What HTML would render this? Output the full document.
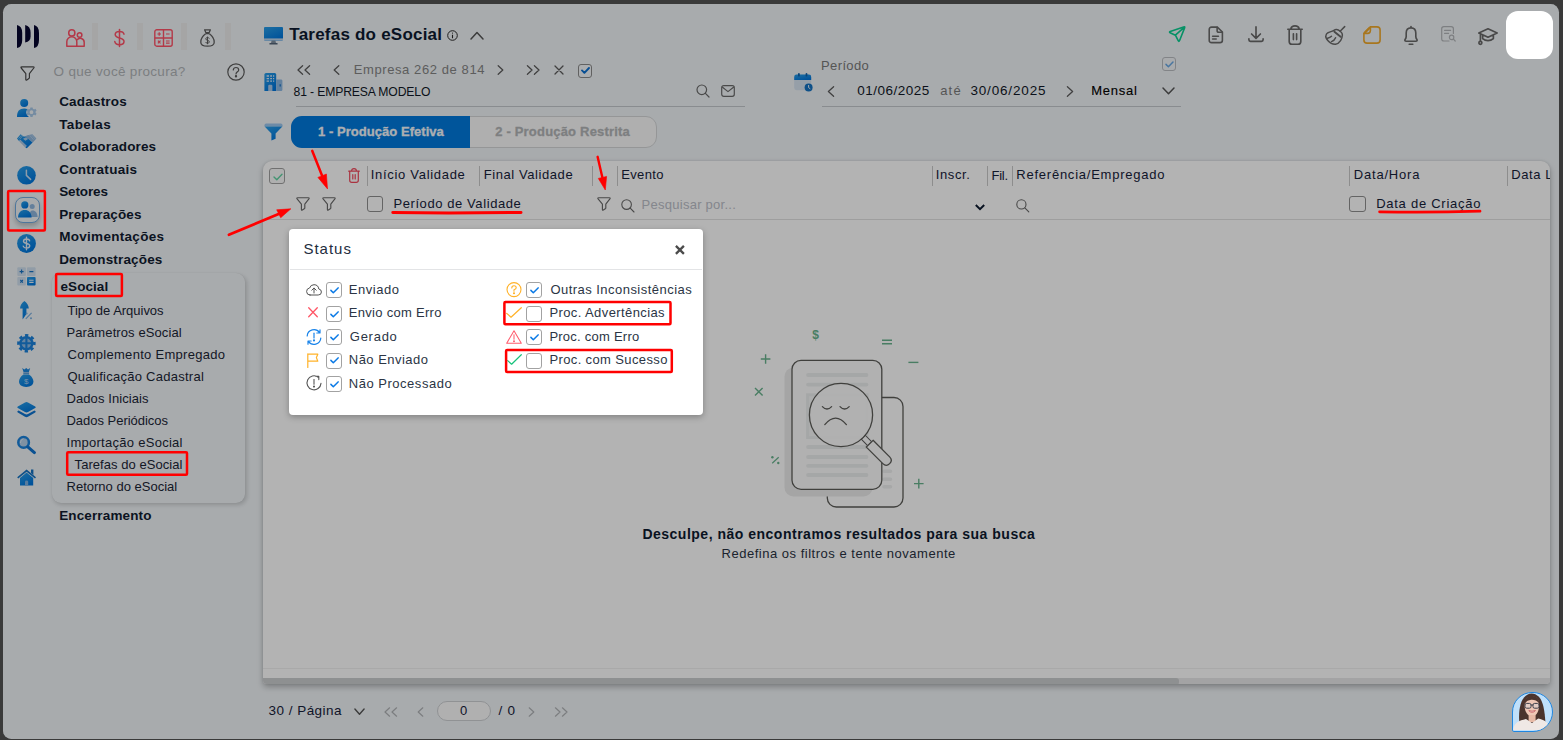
<!DOCTYPE html>
<html lang="pt-BR">
<head>
<meta charset="utf-8">
<title>Tarefas do eSocial</title>
<style>
html,body{margin:0;padding:0;width:1563px;height:740px;overflow:hidden;background:#3a3a3a;}
body{font-family:"Liberation Sans",sans-serif;position:relative;}
#app{position:absolute;left:3px;top:4px;width:1556px;height:734.5px;border-radius:8.5px;background:#f0f4f7;overflow:hidden;}
#c{position:absolute;left:-3px;top:-4px;width:1563px;height:740px;}
#dim{position:absolute;left:0;top:0;width:1563px;height:740px;background:rgba(0,0,0,.298);}
.t{position:absolute;white-space:pre;line-height:20px;height:20px;font-family:"Liberation Sans",sans-serif;}
.a{position:absolute;}
svg{position:absolute;overflow:visible;}
.sep{position:absolute;width:6px;height:27px;top:23px;background:#ececec;}
.vs{position:absolute;width:1px;background:#c9c9c9;}
.cb{position:absolute;box-sizing:border-box;border:1px solid #8f8f8f;border-radius:3px;background:#fff;}
</style>
</head>
<body>
<div id="app"><div id="c">
<!-- ============ SIDEBAR ============ -->
<svg width="0" height="0" style="position:absolute"><defs>
<linearGradient id="bg1" x1="0" y1="0" x2="0.6" y2="1"><stop offset="0" stop-color="#2a9fe8"/><stop offset="1" stop-color="#0076dc"/></linearGradient>
</defs></svg>
<!-- logo -->
<svg style="left:17px;top:25px" width="22" height="23" viewBox="0 0 22 23">
<path d="M0 0 Q5.2 1 5.2 8 V15 Q5.2 22 0 23 Z" fill="#07072f"/>
<path d="M8.2 0 Q13.6 1 13.6 8 V11.5 Q13.6 16.5 8.2 17.5 Z" fill="#07072f"/>
<path d="M17 0 Q22 1 22 8 V15 Q22 22 17 23 Z" fill="#07072f"/>
</svg>
<!-- top shortcut icons -->
<svg style="left:66px;top:29px" width="19" height="18" viewBox="0 0 19 18" fill="none" stroke="#ff5267" stroke-width="1.5">
<circle cx="5.8" cy="3.9" r="3.1"/><path d="M0.8 17.2 V12.8 A5 5 0 0 1 10.8 12.8 V17.2 Z" stroke-linejoin="round"/>
<circle cx="13.6" cy="6" r="2.3"/><path d="M10.8 17.2 H18.2 V13.4 A3.9 3.9 0 0 0 11 11.2" stroke-linejoin="round"/>
</svg>
<div class="sep" style="left:92px"></div>
<svg style="left:114px;top:29px" width="11" height="18" viewBox="0 0 11 18" fill="none" stroke="#ff5267" stroke-width="1.5" stroke-linecap="round">
<path d="M5.5 0.5 V17.5"/><path d="M10 5.2 C9.6 3.2 7.6 2.4 5.5 2.4 C3 2.4 1.2 3.6 1.2 5.6 C1.2 7.8 3.2 8.4 5.5 9 C7.9 9.6 10 10.3 10 12.5 C10 14.6 8 15.7 5.5 15.7 C3 15.7 1.2 14.7 0.8 12.6"/>
</svg>
<div class="sep" style="left:136.5px"></div>
<svg style="left:154px;top:29px" width="19" height="18" viewBox="0 0 19 18" fill="none" stroke="#ff5267" stroke-width="1.4">
<rect x="0.8" y="0.8" width="17.4" height="16.4" rx="2"/><path d="M9.5 0.8 V17.2 M0.8 9 H18.2"/>
<path d="M3.4 5 H7 M5.2 3.2 V6.8 M12 5 H15.6 M3.9 11.6 L6.5 14.4 M6.5 11.6 L3.9 14.4 M12 12 H15.6 M12 14.2 H15.6" stroke-width="1.2"/>
</svg>
<div class="sep" style="left:180.5px"></div>
<svg style="left:200px;top:29px" width="15" height="18" viewBox="0 0 15 18" fill="none" stroke="#5e5e5e" stroke-width="1.3" stroke-linejoin="round">
<path d="M4.6 0.8 H10.4 L9.2 3.6 H5.8 Z"/><path d="M5.6 4.6 H9.4"/>
<path d="M5.6 4.8 C2.6 7 0.8 10.4 0.8 13.2 C0.8 16 3 17.2 7.5 17.2 C12 17.2 14.2 16 14.2 13.2 C14.2 10.4 12.4 7 9.4 4.8"/>
<path d="M9.3 9.6 C9 8.8 8.3 8.5 7.5 8.5 C6.5 8.5 5.8 9 5.8 9.9 C5.8 11.7 9.3 10.9 9.3 12.8 C9.3 13.7 8.5 14.2 7.5 14.2 C6.6 14.2 5.9 13.8 5.6 13 M7.5 7.6 V15.2" stroke-width="1"/>
</svg>
<div class="sep" style="left:224.5px"></div>
<!-- search row -->
<svg style="left:20px;top:66px" width="15" height="15" viewBox="0 0 15 15" fill="none" stroke="#4a4a4a" stroke-width="1.2" stroke-linejoin="round">
<path d="M1.8 0.8 H13.2 Q14.6 0.8 13.8 2 L9.4 7.6 V11.6 Q9.4 12.2 8.9 12.6 L6.8 14 Q5.8 14.5 5.8 13.4 V7.6 L1.2 2 Q0.4 0.8 1.8 0.8 Z"/></svg>
<span class="t" style="left:53.60px;top:61px;font-size:13.5px;font-weight:400;color:#b0b4b8;letter-spacing:0.313px;line-height:21px;height:21px;">O que você procura?</span>
<svg style="left:227px;top:63px" width="18" height="18" viewBox="0 0 18 18" fill="none" stroke="#5a5a5a" stroke-width="1.2">
<circle cx="9" cy="9" r="8.2"/><path d="M6.3 7 C6.3 5.4 7.5 4.5 9 4.5 C10.5 4.5 11.7 5.4 11.7 6.9 C11.7 8.8 9 8.9 9 11" stroke-linecap="round"/><circle cx="9" cy="13.2" r="0.6" fill="#5a5a5a"/>
</svg>
<!-- left icon column -->
<!-- user gear -->
<svg style="left:17px;top:99px" width="20" height="18" viewBox="0 0 20 18">
<circle cx="7.2" cy="4" r="4" fill="url(#bg1)"/>
<path d="M0 18 C0 12.4 2.4 9.6 7.2 9.6 C8.6 9.6 9.8 9.9 10.6 10.4 C9.2 11.6 9 13 9.4 14.6 C9.8 16.2 10.8 17.2 12 18 Z" fill="url(#bg1)"/>
<path d="M13.4 8.4 H15.6 L15.9 9.8 L17.1 10.4 L18.4 9.7 L19.6 11.5 L18.6 12.5 V13.7 L19.6 14.7 L18.4 16.5 L17.1 15.8 L15.9 16.5 L15.6 17.9 H13.4 L13.1 16.5 L11.9 15.8 L10.6 16.5 L9.4 14.7 L10.4 13.7 V12.5 L9.4 11.5 L10.6 9.7 L11.9 10.4 L13.1 9.8 Z M14.5 11.3 A1.85 1.85 0 1 0 14.5 15 A1.85 1.85 0 1 0 14.5 11.3 Z" fill="#a6c6e6" fill-rule="evenodd"/>
</svg>
<!-- handshake -->
<svg style="left:17px;top:134px" width="20" height="15" viewBox="0 0 20 15">
<path d="M6.4 3.2 L10.4 1.2 L15.4 0.2 L19.4 4.6 L15.8 8.6 L9.6 3.6 Z" fill="#8fb6dc"/>
<path d="M12.6 1.2 L16.6 5.8 M14.4 0.6 L18.2 5" stroke="#b9d2ea" stroke-width=".8" fill="none"/>
<path d="M2.2 7.2 L4.4 5.6 L10.4 11.6 L8.2 13.4 Z" fill="#8fb6dc" opacity=".75"/>
<path d="M0 4.4 L3.6 0.2 L6.6 2.6 L8.8 2.8 L15.6 8.6 L9.8 14.2 L8.4 13.6 L9.8 11.8 L3.4 5.8 L2 7 Z" fill="url(#bg1)"/>
<path d="M1.4 4.6 L4.6 1.2 M2.6 5.4 L5.6 2" stroke="#a9c9e8" stroke-width=".7" fill="none"/>
<path d="M6 4.8 L9 3.2 L11.2 5 L8.4 6.8 Z" fill="#b9d2ea" opacity=".9"/>
</svg>
<!-- clock -->
<svg style="left:17px;top:166px" width="19" height="19" viewBox="0 0 19 19">
<circle cx="9.5" cy="9.3" r="9.3" fill="url(#bg1)"/>
<path d="M9.4 4.2 V9.4 L13.6 13.4" fill="none" stroke="#c9dff2" stroke-width="1.5" stroke-linecap="round" stroke-linejoin="round"/>
</svg>
<!-- selected: users -->
<div class="a" style="left:14.5px;top:196.5px;width:25.5px;height:26.5px;box-sizing:border-box;border:1px solid #6fa9de;border-radius:8px;background:#eef2f6;box-shadow:0 3px 5px rgba(0,0,0,.22);"></div>
<svg style="left:18px;top:201px" width="20" height="17" viewBox="0 0 20 17">
<circle cx="14.2" cy="5.6" r="2.5" fill="#8fb6dd"/>
<path d="M11 16 C11 11.6 12.4 9.4 14.6 9.4 C17.4 9.4 19.4 11.6 19.6 16 Z" fill="#8fb6dd"/>
<circle cx="6.8" cy="3.9" r="3.6" fill="url(#bg1)"/>
<path d="M0 16.4 C0.2 11.6 2.8 9 6.8 9 C10.8 9 13.4 11.6 13.6 16.4 Z" fill="url(#bg1)"/>
</svg>
<!-- dollar circle -->
<svg style="left:17px;top:234px" width="19" height="19" viewBox="0 0 19 19">
<circle cx="9.5" cy="9.5" r="9.4" fill="url(#bg1)"/>
<path d="M9.5 3.2 V15.8 M12.6 6.8 C12.3 5.6 11 5 9.5 5 C7.8 5 6.5 5.8 6.5 7.2 C6.5 10.2 12.7 8.6 12.7 11.8 C12.7 13.3 11.3 14.1 9.5 14.1 C7.8 14.1 6.6 13.4 6.2 12.1" fill="none" stroke="#e4eef8" stroke-width="1.4" stroke-linecap="round"/>
</svg>
<!-- calculator -->
<svg style="left:17px;top:267px" width="19" height="19" viewBox="0 0 19 19">
<rect x="0.3" y="0.3" width="8.6" height="8.6" rx="1" fill="#cfdfee"/><rect x="10" y="0.3" width="8.6" height="8.6" rx="1" fill="#cfdfee"/>
<rect x="0.3" y="10" width="8.6" height="8.6" rx="1" fill="#cfdfee"/><rect x="10" y="10" width="8.6" height="8.6" rx="1" fill="url(#bg1)"/>
<path d="M2.6 4.6 H6.6 M4.6 2.6 V6.6 M12.4 4.6 H16.4 M3.3 13 L5.9 15.6 M5.9 13 L3.3 15.6" stroke="#1673c4" stroke-width="1.1" fill="none"/>
<path d="M12.2 13.2 H16.6 M12.2 15.4 H16.6" stroke="#e8f1fa" stroke-width="1.1" fill="none"/>
</svg>
<!-- arrow / adjust -->
<svg style="left:20px;top:301px" width="13" height="19" viewBox="0 0 13 19">
<path d="M4.4 0 C7 1.8 8.6 4.6 8.8 7.4 L6.4 7.4 V13 L2.6 18.4 V7.4 L0 7.4 C0.2 4.6 1.8 1.8 4.4 0 Z" fill="url(#bg1)"/>
<path d="M5.8 17.8 L11.6 11.8" stroke="#7aaede" stroke-width="1.2"/><circle cx="6.6" cy="12.6" r="1" fill="#7aaede"/><circle cx="11" cy="17.2" r="1" fill="#7aaede"/>
</svg>
<!-- crosshair gear -->
<svg style="left:17px;top:334px" width="19" height="19" viewBox="0 0 19 19">
<circle cx="9.4" cy="9.3" r="7.9" fill="none" stroke="#1a82dc" stroke-width="2.7" stroke-dasharray="3.3 2.905" stroke-dashoffset="1.65"/>
<circle cx="9.4" cy="9.3" r="6" fill="#8dbbe6" stroke="#1a82dc" stroke-width="2.4"/>
<path d="M9.4 2.6 V16 M2.7 9.3 H16.1" stroke="#1a82dc" stroke-width="2.1"/>
</svg>
<!-- money bag -->
<svg style="left:19.2px;top:368px" width="15" height="19" viewBox="0 0 15 19">
<path d="M3.2 0 L5.4 1.6 L7.2 0 L9 1.6 L11.2 0 L9.9 4 H4.5 Z" fill="#1d86dc"/>
<rect x="4.3" y="4.3" width="5.8" height="1.9" fill="#5f9fd8"/>
<path d="M4.5 6.4 C1.4 8.4 0 11 0 13.6 C0 17 2.8 19 7.2 19 C11.6 19 14.4 17 14.4 13.6 C14.4 11 13 8.4 9.9 6.4 Z" fill="url(#bg1)"/>
<text x="7.2" y="16.4" font-family="Liberation Sans, sans-serif" font-size="8" font-weight="400" fill="#a9cdf0" text-anchor="middle">$</text>
</svg>
<!-- layers -->
<svg style="left:17px;top:402.2px" width="19" height="16" viewBox="0 0 19 16">
<path d="M1.6 8.4 L0.8 9 Q-0.4 9.8 0.8 10.6 L8 14.8 Q9.5 15.6 11 14.8 L18.2 10.6 Q19.4 9.8 18.2 9 L17.4 8.4 L11 12 Q9.5 12.8 8 12 Z" fill="#0f74d0"/>
<path d="M8 0.5 Q9.5 -0.3 11 0.5 L18.2 4.5 Q19.4 5.3 18.2 6.1 L11 10.1 Q9.5 10.9 8 10.1 L0.8 6.1 Q-0.4 5.3 0.8 4.5 Z" fill="url(#bg1)"/>
</svg>
<!-- magnifier -->
<svg style="left:17px;top:434.6px" width="20" height="20" viewBox="0 0 20 20">
<circle cx="6.6" cy="7.4" r="5.3" fill="#b4cfe9" stroke="#1a82dc" stroke-width="2.5"/>
<path d="M3.4 7.6 Q3.4 4.6 6 3.8" stroke="#dceaf7" stroke-width="1" fill="none" stroke-linecap="round"/>
<path d="M10.8 11.8 L17.4 17.6" stroke="#0f74d0" stroke-width="3.1" stroke-linecap="round"/>
</svg>
<!-- home -->
<svg style="left:17px;top:469px" width="20" height="17" viewBox="0 0 20 17">
<path d="M14 0.6 H16.4 V6 L14 4 Z" fill="#1572c2"/>
<path d="M3 9 L9.6 3.6 L16.2 9 V16.4 H3 Z" fill="url(#bg1)"/>
<path d="M9.6 0.6 L19 8.2 L18 9.5 L9.6 2.8 L1.2 9.5 L0.2 8.2 Z" fill="#1572c2"/>
<path d="M8 16.4 V13 Q8 11.6 9.6 11.6 Q11.2 11.6 11.2 13 V16.4 Z" fill="#7fb0de"/>
</svg>
<!-- menu labels -->
<span class="t" style="left:59.20px;top:91px;font-size:13.5px;font-weight:700;color:#111c30;letter-spacing:0.186px;line-height:21px;height:21px;">Cadastros</span>
<span class="t" style="left:59.20px;top:114px;font-size:13.5px;font-weight:700;color:#111c30;letter-spacing:0.372px;line-height:21px;height:21px;">Tabelas</span>
<span class="t" style="left:59.20px;top:136px;font-size:13.5px;font-weight:700;color:#111c30;letter-spacing:0.136px;line-height:21px;height:21px;">Colaboradores</span>
<span class="t" style="left:59.20px;top:159px;font-size:13.5px;font-weight:700;color:#111c30;letter-spacing:0.280px;line-height:21px;height:21px;">Contratuais</span>
<span class="t" style="left:59.20px;top:181px;font-size:13.5px;font-weight:700;color:#111c30;letter-spacing:-0.136px;line-height:21px;height:21px;">Setores</span>
<span class="t" style="left:59.20px;top:204px;font-size:13.5px;font-weight:700;color:#111c30;letter-spacing:0.126px;line-height:21px;height:21px;">Preparações</span>
<span class="t" style="left:59.20px;top:226px;font-size:13.5px;font-weight:700;color:#111c30;letter-spacing:0.294px;line-height:21px;height:21px;">Movimentações</span>
<span class="t" style="left:59.20px;top:249px;font-size:13.5px;font-weight:700;color:#111c30;letter-spacing:0.152px;line-height:21px;height:21px;">Demonstrações</span>
<div class="a" style="left:51.7px;top:272.5px;width:193.8px;height:230.2px;border-radius:9px;background:#f0f4f7;box-shadow:1.5px 2px 4px rgba(0,0,0,.16), 0 0 1px rgba(0,0,0,.1);"></div>
<span class="t" style="left:60.50px;top:276px;font-size:13.5px;font-weight:700;color:#111c30;letter-spacing:0.062px;line-height:21px;height:21px;">eSocial</span>
<span class="t" style="left:67.50px;top:300px;font-size:13px;font-weight:400;color:#1b2536;letter-spacing:-0.018px;line-height:21px;height:21px;">Tipo de Arquivos</span>
<span class="t" style="left:66.50px;top:322px;font-size:13px;font-weight:400;color:#1b2536;letter-spacing:0.103px;line-height:21px;height:21px;">Parâmetros eSocial</span>
<span class="t" style="left:67.50px;top:344px;font-size:13px;font-weight:400;color:#1b2536;letter-spacing:0.284px;line-height:21px;height:21px;">Complemento Empregado</span>
<span class="t" style="left:67.50px;top:366px;font-size:13px;font-weight:400;color:#1b2536;letter-spacing:0.262px;line-height:21px;height:21px;">Qualificação Cadastral</span>
<span class="t" style="left:66.50px;top:388px;font-size:13px;font-weight:400;color:#1b2536;letter-spacing:0.083px;line-height:21px;height:21px;">Dados Iniciais</span>
<span class="t" style="left:66.50px;top:410px;font-size:13px;font-weight:400;color:#1b2536;letter-spacing:-0.026px;line-height:21px;height:21px;">Dados Periódicos</span>
<span class="t" style="left:66.50px;top:432px;font-size:13px;font-weight:400;color:#1b2536;letter-spacing:0.277px;line-height:21px;height:21px;">Importação eSocial</span>
<span class="t" style="left:74.60px;top:454px;font-size:13px;font-weight:400;color:#1b2536;letter-spacing:0.055px;line-height:21px;height:21px;">Tarefas do eSocial</span>
<span class="t" style="left:66.50px;top:476px;font-size:13px;font-weight:400;color:#1b2536;letter-spacing:0.007px;line-height:21px;height:21px;">Retorno do eSocial</span>
<span class="t" style="left:59.20px;top:505px;font-size:13.5px;font-weight:700;color:#111c30;letter-spacing:0.133px;line-height:21px;height:21px;">Encerramento</span>
<!-- ============ HEADER ============ -->
<svg style="left:263.5px;top:27px" width="19" height="18" viewBox="0 0 19 18">
<rect x="0" y="0" width="19" height="13.4" rx="1" fill="url(#bg1)"/>
<rect x="0" y="11.4" width="19" height="2" fill="#bcd3ea"/>
<path d="M7.6 13.4 H11.4 L12 16 H7 Z" fill="#7e8fa0"/><rect x="5.4" y="16" width="8.2" height="1.4" rx=".5" fill="#55667a"/>
</svg>
<span class="t" style="left:289.30px;top:24px;font-size:17px;font-weight:700;color:#0d1a2f;letter-spacing:0.221px;line-height:21px;height:21px;">Tarefas do eSocial</span>
<svg style="left:447px;top:30px" width="11" height="11" viewBox="0 0 11 11" fill="none" stroke="#2a2a2a" stroke-width="1">
<circle cx="5.5" cy="5.5" r="4.8"/><path d="M5.5 4.8 V8.2" stroke-width="1.1"/><circle cx="5.5" cy="3.1" r=".6" fill="#2a2a2a" stroke="none"/></svg>
<svg style="left:470px;top:31px" width="14" height="9" viewBox="0 0 14 9" fill="none" stroke="#565656" stroke-width="1.5" stroke-linecap="round" stroke-linejoin="round"><path d="M1 8 L7 1.6 L13 8"/></svg>

<!-- top right action icons -->
<svg style="left:1168px;top:25px" width="18" height="18" viewBox="0 0 18 18" fill="none" stroke="#0ccf92" stroke-width="1.6" stroke-linejoin="round" stroke-linecap="round">
<path d="M15.6 1.9 L2.2 6.4 Q0.9 7 2.1 7.7 L7.4 10.2 L10.2 15.7 Q10.9 17 11.5 15.7 L16.6 2.9 Q17.2 1.4 15.6 1.9 Z M7.4 10.2 L16.2 2.3"/></svg>
<svg style="left:1208px;top:26px" width="16" height="18" viewBox="-0.5 -0.3 17 18.9" fill="none" stroke="#6a6a6a" stroke-width="1.7" stroke-linejoin="round" stroke-linecap="round">
<path d="M3.4 0.8 H9.4 L14.8 6 V14.6 Q14.8 17.2 12.2 17.2 H3.4 Q0.8 17.2 0.8 14.6 V3.4 Q0.8 0.8 3.4 0.8 Z"/><path d="M9.2 1 V4.6 Q9.2 6.2 10.8 6.2 H14.6"/><path d="M4.4 10.4 H10.6 M4.4 13.4 H8.2"/></svg>
<svg style="left:1248px;top:26px" width="16" height="17" viewBox="0 0 16 17" fill="none" stroke="#686868" stroke-width="1.65" stroke-linejoin="round" stroke-linecap="round">
<path d="M8 0.9 V12.2 M3.6 8 L8 12.4 L12.4 8 M0.9 12.8 V13.8 Q0.9 15.4 2.5 15.4 H13.5 Q15.1 15.4 15.1 13.8 V12.8"/></svg>
<svg style="left:1287px;top:25px" width="16" height="20" viewBox="0 0 16 20" fill="none" stroke="#686868" stroke-width="1.65" stroke-linejoin="round" stroke-linecap="round">
<path d="M0.8 4.2 H15.2 M3.8 4 Q4.4 0.9 8 0.9 Q11.6 0.9 12.2 4 M2.2 4.4 V16.4 Q2.2 19.2 5 19.2 H11 Q13.8 19.2 13.8 16.4 V4.4 M6.4 8.8 V14.6 M9.6 8.8 V14.6"/></svg>
<svg style="left:1325px;top:26px" width="20" height="19" viewBox="0 0 20 19" fill="none" stroke="#6a6a6a" stroke-width="1.5" stroke-linejoin="round" stroke-linecap="round">
<path d="M19.7 0.6 L15.1 5.2"/><path d="M11.2 3.6 C13.5 3.3 17.6 6.6 17.4 9 C17.2 11.6 16.6 13.1 15.6 14.6 C14 16.9 12.2 18.1 10.5 18.3 C7.5 18.5 4.6 16.6 2.8 14.5 C1.2 12.6 0.5 10.9 0.8 9.9 C1.1 8.3 1.8 7.3 3 6.7 C4.9 5.9 7 5.5 8.9 4.4 C9.8 3.9 10.4 3.7 11.2 3.6 Z"/><path d="M9.4 5.7 L15.6 10.8" stroke-width="1.9"/><path d="M2.6 12.3 Q5 11.6 6.5 10.2 M6.5 15.6 Q9.6 14.4 10.6 11.8"/></svg>
<svg style="left:1363px;top:26px" width="18" height="18" viewBox="0 0 18 18" fill="none" stroke="#f0a92c" stroke-width="1.6" stroke-linejoin="round" stroke-linecap="round">
<path d="M7.4 0.9 H14 Q17.1 0.9 17.1 4 V14 Q17.1 17.1 14 17.1 H4 Q0.9 17.1 0.9 14 V7.4 Z"/><path d="M7.4 1.2 V4.6 Q7.4 7.4 4.6 7.4 H1.2" /><path d="M6.2 2.2 L2.2 6.2" stroke-width="2.2"/></svg>
<svg style="left:1404px;top:26px" width="14" height="19" viewBox="0 0 14 19" fill="none" stroke="#686868" stroke-width="1.65" stroke-linejoin="round" stroke-linecap="round">
<path d="M7 0.6 V1.6 M2.2 7 Q2.2 1.8 7 1.8 Q11.8 1.8 11.8 7 V10.6 Q11.8 12.4 13 13.6 Q13.6 15.2 11.8 15.2 H2.2 Q0.4 15.2 1 13.6 Q2.2 12.4 2.2 10.6 Z M5.2 18.2 H8.8"/></svg>
<svg style="left:1441px;top:26px" width="15" height="16" viewBox="0 0 15 16" fill="none" stroke="#b3b6b9" stroke-width="1.2" stroke-linejoin="round" stroke-linecap="round">
<path d="M8 15 H3 Q0.7 15 0.7 12.8 V2.8 Q0.7 0.7 2.8 0.7 H10.2 Q12.4 0.7 12.4 2.8 V7.4 M3.6 4.4 H9.6 M3.6 7.4 H7.6"/><circle cx="10.6" cy="11.4" r="2.2"/><path d="M12.4 13.2 L14.2 15"/></svg>
<svg style="left:1477.5px;top:28px" width="20" height="17" viewBox="0 0 20 17" fill="none" stroke="#686868" stroke-width="1.65" stroke-linejoin="round" stroke-linecap="round">
<path d="M10 0.8 L19.2 5 L10 9.2 L0.8 5 Z M4.6 7 V10.6 Q7 12.6 10 12.6 Q13 12.6 15.4 10.6 V7 M2.4 5.8 V13.2"/><circle cx="2.4" cy="14.8" r="1.5"/></svg>

<!-- ============ COMPANY NAV ============ -->
<svg style="left:264px;top:73px" width="19" height="18" viewBox="0 0 19 18">
<path d="M0.4 1.6 Q0.4 0 2 0 H10.6 Q12.2 0 12.2 1.6 V18 H0.4 Z" fill="url(#bg1)"/>
<path d="M12.2 6.4 H17 Q18.4 6.4 18.4 7.8 V16.8 Q18.4 18 17.2 18 H12.2 Z" fill="#8db8e2"/>
<path d="M2.6 3 H5 M6.2 3 H8 M9 3 H10.2 M2.6 5.6 H5 M6.2 5.6 H8 M9 5.6 H10.2 M2.6 8.2 H5 M6.2 8.2 H8 M9 8.2 H10.2" stroke="#d7e6f5" stroke-width="1.3"/>
<path d="M4.2 18 V13 Q4.2 11.8 5.4 11.8 H7.2 Q8.4 11.8 8.4 13 V18 Z" fill="#a9c9ea"/>
<path d="M16.2 11.2 V13.4" stroke="#1672c4" stroke-width="1.2"/>
</svg>
<svg style="left:296.5px;top:64.8px" width="14" height="10" viewBox="0 0 14 10" fill="none" stroke="#5c5c5c" stroke-width="1.3" stroke-linecap="round" stroke-linejoin="round"><path d="M5.6 0.8 L1 5 L5.6 9.2 M12.6 0.8 L8 5 L12.6 9.2"/></svg>
<svg style="left:333px;top:64.8px" width="7" height="10" viewBox="0 0 7 10" fill="none" stroke="#5c5c5c" stroke-width="1.3" stroke-linecap="round" stroke-linejoin="round"><path d="M5.8 0.8 L1.2 5 L5.8 9.2"/></svg>
<span class="t" style="left:353.80px;top:59px;font-size:13px;font-weight:400;color:#858585;letter-spacing:0.584px;line-height:21px;height:21px;">Empresa 262 de 814</span>
<svg style="left:496.5px;top:64.8px" width="7" height="10" viewBox="0 0 7 10" fill="none" stroke="#5c5c5c" stroke-width="1.3" stroke-linecap="round" stroke-linejoin="round"><path d="M1.2 0.8 L5.8 5 L1.2 9.2"/></svg>
<svg style="left:525.5px;top:64.8px" width="14" height="10" viewBox="0 0 14 10" fill="none" stroke="#5c5c5c" stroke-width="1.3" stroke-linecap="round" stroke-linejoin="round"><path d="M1.4 0.8 L6 5 L1.4 9.2 M8.4 0.8 L13 5 L8.4 9.2"/></svg>
<svg style="left:554px;top:64.8px" width="10" height="10" viewBox="0 0 10 10" fill="none" stroke="#5c5c5c" stroke-width="1.3" stroke-linecap="round"><path d="M1 1 L9 9 M9 1 L1 9"/></svg>
<div class="cb" style="left:578px;top:63.8px;width:14px;height:14px;border-color:#8a8a8a;background:#f4f7fa"></div>
<svg style="left:580.6px;top:67.2px" width="9" height="7" viewBox="0 0 9 7" fill="none" stroke="#0a6fd2" stroke-width="1.9" stroke-linecap="round" stroke-linejoin="round"><path d="M1 3.4 L3.4 5.8 L8 1"/></svg>
<span class="t" style="left:293.60px;top:82px;font-size:12.2px;font-weight:400;color:#111827;letter-spacing:-0.151px;line-height:20px;height:20px;">81 - EMPRESA MODELO</span>
<svg style="left:695.6px;top:84.4px" width="14" height="14" viewBox="0 0 14 14" fill="none" stroke="#6a6a6a" stroke-width="1.2" stroke-linecap="round"><circle cx="5.8" cy="5.8" r="4.8"/><path d="M9.4 9.4 L13 13"/></svg>
<svg style="left:720.6px;top:85.4px" width="14" height="12" viewBox="0 0 14 12" fill="none" stroke="#6a6a6a" stroke-width="1.2" stroke-linejoin="round"><rect x="0.7" y="0.7" width="12.6" height="10.6" rx="2"/><path d="M1.2 2 L7 6.6 L12.8 2"/></svg>
<div class="a" style="left:296px;top:106px;width:449px;height:1px;background:#c4c8cc"></div>

<!-- ============ PERIOD ============ -->
<svg style="left:793.5px;top:73px" width="19" height="19" viewBox="0 0 19 19">
<rect x="0.2" y="1.6" width="17" height="15.6" rx="2.4" fill="#d6e3f0"/>
<path d="M0.2 7 V4 Q0.2 1.6 2.6 1.6 H14.8 Q17.2 1.6 17.2 4 V7 Z" fill="url(#bg1)"/>
<rect x="4" y="0" width="1.8" height="3.6" rx=".9" fill="#0f62ab"/><rect x="11.6" y="0" width="1.8" height="3.6" rx=".9" fill="#0f62ab"/>
<circle cx="14.6" cy="14.4" r="4" fill="#1572c2"/><path d="M14.6 12.4 V14.6 L16 15.6" stroke="#e6f0fa" stroke-width="1" fill="none" stroke-linecap="round"/>
</svg>
<span class="t" style="left:821.00px;top:55px;font-size:13px;font-weight:400;color:#7a7a7a;letter-spacing:0.383px;line-height:21px;height:21px;">Período</span>
<svg style="left:827px;top:86px" width="8" height="11" viewBox="0 0 8 11" fill="none" stroke="#5c5c5c" stroke-width="1.3" stroke-linecap="round" stroke-linejoin="round"><path d="M6.6 0.8 L1.4 5.5 L6.6 10.2"/></svg>
<span class="t" style="left:857.20px;top:80px;font-size:13.5px;font-weight:400;color:#111827;letter-spacing:0.505px;line-height:21px;height:21px;">01/06/2025</span>
<span class="t" style="left:940.20px;top:80px;font-size:13px;font-weight:400;color:#7a7a7a;letter-spacing:1.179px;line-height:21px;height:21px;">até</span>
<span class="t" style="left:970.40px;top:80px;font-size:13.5px;font-weight:400;color:#111827;letter-spacing:0.838px;line-height:21px;height:21px;">30/06/2025</span>
<svg style="left:1066px;top:86px" width="8" height="11" viewBox="0 0 8 11" fill="none" stroke="#5c5c5c" stroke-width="1.3" stroke-linecap="round" stroke-linejoin="round"><path d="M1.4 0.8 L6.6 5.5 L1.4 10.2"/></svg>
<span class="t" style="left:1091.20px;top:80px;font-size:13px;font-weight:400;color:#000;letter-spacing:0.756px;line-height:21px;height:21px;-webkit-text-stroke:.12px #000;">Mensal</span>
<svg style="left:1162px;top:87px" width="13" height="8" viewBox="0 0 13 8" fill="none" stroke="#565656" stroke-width="1.5" stroke-linecap="round" stroke-linejoin="round"><path d="M1 1 L6.5 6.8 L12 1"/></svg>
<div class="cb" style="left:1162px;top:57px;width:14px;height:14px;border-color:#b9bcc0;background:#f1f4f7"></div>
<svg style="left:1164.5px;top:60.5px" width="9" height="7" viewBox="0 0 9 7" fill="none" stroke="#6aa9e4" stroke-width="1.5" stroke-linecap="round" stroke-linejoin="round"><path d="M1 3.4 L3.4 5.8 L8 1"/></svg>
<div class="a" style="left:822px;top:106px;width:359px;height:1px;background:#c4c8cc"></div>

<!-- ============ TABS ============ -->
<svg style="left:263.5px;top:123px" width="19" height="18" viewBox="0 0 19 18">
<path d="M0.4 2.4 Q0.4 0.6 2.2 0.6 H16.8 Q18.6 0.6 18.6 2.4 L18.4 3.4 H0.6 Z" fill="#9cc6ee"/>
<path d="M0.6 3.6 H18.4 L11.6 10.6 V15.8 L7.4 17.6 V10.6 Z" fill="url(#bg1)"/>
</svg>
<div class="a" style="left:290.8px;top:116px;width:366.2px;height:31.6px;box-sizing:border-box;border:1px solid #d4d6d8;border-radius:11px;background:#fafafa;"></div>
<div class="a" style="left:290.8px;top:116px;width:179.5px;height:31.6px;border-radius:11px 0 0 11px;background:#0079dd;"></div>
<span class="t" style="left:318.00px;top:121px;font-size:13px;font-weight:700;color:#f4f8fc;letter-spacing:0.045px;line-height:21px;height:21px;-webkit-text-stroke:.3px #f4f8fc;">1 - Produção Efetiva</span>
<span class="t" style="left:495.20px;top:121px;font-size:13px;font-weight:700;color:#b3b5b7;letter-spacing:0.194px;line-height:21px;height:21px;-webkit-text-stroke:.3px #b3b5b7;">2 - Produção Restrita</span>

<!-- ============ TABLE ============ -->
<div class="a" style="left:263px;top:160.8px;width:1287.4px;height:523.4px;border-radius:9px 9px 4px 4px;background:#fff;box-shadow:0 3px 6px rgba(0,0,0,.26), 0 0 3px rgba(0,0,0,.1);overflow:hidden;">
<div class="a" style="left:0;top:507.5px;width:1288px;height:1px;background:#f1f1f1"></div>
<div class="a" style="left:0;top:517.2px;width:1288px;height:7px;background:#e8e8ea"></div>
<div class="a" style="left:0;top:517.2px;width:916px;height:7px;background:#cbcdcf;border-radius:0 3px 3px 0"></div>
</div>
<div class="a" style="left:263px;top:219px;width:1287px;height:1px;background:#e2e2e2"></div>
<!-- header row -->
<div class="cb" style="left:269.2px;top:168px;width:16px;height:16px;border-color:#a0a0a0;background:#fafafa"></div>
<svg style="left:272.5px;top:172.5px" width="10" height="8" viewBox="0 0 10 8" fill="none" stroke="#62d3a3" stroke-width="1.4" stroke-linecap="round" stroke-linejoin="round"><path d="M1 4 L3.8 6.8 L9 1.2"/></svg>
<svg style="left:347.5px;top:168px" width="12" height="15" viewBox="0 0 12 15" fill="none" stroke="#f2495c" stroke-width="1.2" stroke-linejoin="round" stroke-linecap="round">
<path d="M0.7 3.2 H11.3 M3.6 3 Q3.6 0.7 6 0.7 Q8.4 0.7 8.4 3 M1.7 3.4 V12.2 Q1.7 14.3 3.8 14.3 H8.2 Q10.3 14.3 10.3 12.2 V3.4 M4.8 6.6 V11 M7.2 6.6 V11"/></svg>
<div class="vs" style="left:367px;top:166px;height:20px"></div>
<span class="t" style="left:370.80px;top:164px;font-size:13px;font-weight:400;color:#16213a;letter-spacing:0.694px;line-height:21px;height:21px;">Início Validade</span>
<div class="vs" style="left:479.3px;top:166px;height:20px"></div>
<span class="t" style="left:483.80px;top:164px;font-size:13px;font-weight:400;color:#16213a;letter-spacing:0.570px;line-height:21px;height:21px;">Final Validade</span>
<div class="vs" style="left:592.2px;top:166px;height:20px"></div>
<div class="vs" style="left:617.2px;top:166px;height:20px"></div>
<span class="t" style="left:621.20px;top:164px;font-size:13px;font-weight:400;color:#16213a;letter-spacing:0.371px;line-height:21px;height:21px;">Evento</span>
<div class="vs" style="left:932.2px;top:166px;height:20px"></div>
<span class="t" style="left:935.80px;top:164px;font-size:13px;font-weight:400;color:#16213a;letter-spacing:0.589px;line-height:21px;height:21px;">Inscr.</span>
<div class="vs" style="left:987.2px;top:166px;height:20px"></div>
<span class="t" style="left:991.60px;top:165px;font-size:13px;font-weight:400;color:#16213a;letter-spacing:-0.306px;line-height:21px;height:21px;">Fil.</span>
<div class="vs" style="left:1012.4px;top:166px;height:20px"></div>
<span class="t" style="left:1016.30px;top:164px;font-size:13px;font-weight:400;color:#16213a;letter-spacing:0.760px;line-height:21px;height:21px;">Referência/Empregado</span>
<div class="vs" style="left:1349.3px;top:166px;height:20px"></div>
<span class="t" style="left:1353.80px;top:164px;font-size:13px;font-weight:400;color:#16213a;letter-spacing:0.798px;line-height:21px;height:21px;">Data/Hora</span>
<div class="vs" style="left:1507.2px;top:166px;height:20px"></div>
<div class="a" style="left:1500px;top:162px;width:50.4px;height:30px;overflow:hidden"><span class="t" style="left:11.30px;top:2px;font-size:13px;font-weight:400;color:#16213a;letter-spacing:0.586px;line-height:21px;height:21px;">Data L</span></div>
<!-- filter row -->
<svg style="left:296px;top:197.3px" width="14" height="14" viewBox="0 0 14 14" fill="none" stroke="#6a6a6a" stroke-width="1.15" stroke-linejoin="round"><path d="M1.7 0.7 H12.3 Q13.7 0.7 12.9 1.9 L8.8 7.1 V10.9 Q8.8 11.5 8.3 11.8 L6.3 13.1 Q5.4 13.6 5.4 12.6 V7.1 L1.1 1.9 Q0.3 0.7 1.7 0.7 Z"/></svg>
<svg style="left:322.2px;top:197.3px" width="14" height="14" viewBox="0 0 14 14" fill="none" stroke="#6a6a6a" stroke-width="1.15" stroke-linejoin="round"><path d="M1.7 0.7 H12.3 Q13.7 0.7 12.9 1.9 L8.8 7.1 V10.9 Q8.8 11.5 8.3 11.8 L6.3 13.1 Q5.4 13.6 5.4 12.6 V7.1 L1.1 1.9 Q0.3 0.7 1.7 0.7 Z"/></svg>
<div class="cb" style="left:367.2px;top:196.2px;width:16px;height:16px;"></div>
<span class="t" style="left:393.40px;top:193px;font-size:13px;font-weight:400;color:#16213a;letter-spacing:0.588px;line-height:21px;height:21px;">Período de Validade</span>
<svg style="left:597px;top:197.3px" width="14" height="14" viewBox="0 0 14 14" fill="none" stroke="#6a6a6a" stroke-width="1.15" stroke-linejoin="round"><path d="M1.7 0.7 H12.3 Q13.7 0.7 12.9 1.9 L8.8 7.1 V10.9 Q8.8 11.5 8.3 11.8 L6.3 13.1 Q5.4 13.6 5.4 12.6 V7.1 L1.1 1.9 Q0.3 0.7 1.7 0.7 Z"/></svg>
<svg style="left:621px;top:199px" width="14" height="14" viewBox="0 0 14 14" fill="none" stroke="#6a6a6a" stroke-width="1.1" stroke-linecap="round"><circle cx="5.6" cy="5.6" r="4.8"/><path d="M9.2 9.2 L13 13"/></svg>
<span class="t" style="left:641.60px;top:194px;font-size:13px;font-weight:400;color:#bcc0c9;letter-spacing:0.259px;line-height:21px;height:21px;">Pesquisar por...</span>
<svg style="left:974.5px;top:204px" width="10" height="7" viewBox="0 0 10 7" fill="none" stroke="#0d1a2f" stroke-width="2" stroke-linejoin="miter"><path d="M0.8 1 L5 5.2 L9.2 1"/></svg>
<svg style="left:1016.2px;top:199px" width="14" height="14" viewBox="0 0 14 14" fill="none" stroke="#666" stroke-width="1.1" stroke-linecap="round"><circle cx="5.4" cy="5.4" r="4.6"/><path d="M8.8 8.8 L12.8 12.8"/></svg>
<div class="cb" style="left:1349px;top:196px;width:17px;height:16px;"></div>
<span class="t" style="left:1376.20px;top:193px;font-size:13px;font-weight:400;color:#16213a;letter-spacing:0.735px;line-height:21px;height:21px;">Data de Criação</span>

<!-- ============ EMPTY STATE ============ -->
<svg style="left:735px;top:315px" width="210" height="200" viewBox="735 315 210 200">
<rect x="827.3" y="397.5" width="75.7" height="109.5" rx="9" fill="#fff" stroke="#5c5c58" stroke-width="1.3"/>
<g stroke="#eef0f0" stroke-width="3.6" stroke-linecap="round"><path d="M884 471.3 H890.5 M884 479.3 H890.5 M884 486.8 H890.5"/></g>
<rect x="784.5" y="367.5" width="88" height="129" rx="9" fill="#ebebeb"/>
<rect x="792" y="360.3" width="89.8" height="129" rx="9" fill="#fdfdfd" stroke="#5c5c58" stroke-width="1.3"/>
<g stroke="#eceeee" stroke-width="3.8" stroke-linecap="round"><path d="M808 375 H866.5 M808 384.6 H866.5 M808 447 H866.5 M808 457 H866.5 M808 465.8 H866.5 M808 475 H866.5"/></g>
<rect x="807.6" y="394.8" width="59.4" height="42.8" fill="#f6f7f7" stroke="#eceeee" stroke-width="3"/>
<g transform="rotate(45 841 415)"><rect x="872.6" y="412.2" width="9" height="5.6" fill="#fdfdfd" stroke="#5a5a5a" stroke-width="1"/><path d="M881.6 410.2 H905 Q909.8 410.2 909.8 415 Q909.8 419.8 905 419.8 H881.6 Z" fill="#fdfdfd" stroke="#5c5c58" stroke-width="1.3"/></g>
<circle cx="841" cy="415" r="31.6" fill="#fdfdfd" fill-opacity=".86" stroke="#5c5c58" stroke-width="1.3"/>
<g fill="none" stroke="#5c5c58" stroke-width="1.3" stroke-linecap="round"><path d="M822.4 406.6 Q827 411.4 831.6 406.6"/><path d="M840 406.6 Q844.6 411.4 849.2 406.6"/><path d="M824.8 424.6 Q835.6 411.6 846.4 424.6"/></g>
<g fill="none" stroke="#68b38d" stroke-width="1.4"><path d="M882 340.2 H892 M882 343.8 H892"/><path d="M760.8 359 H770.4 M765.6 354.2 V363.8"/><path d="M908.4 362.4 H918.4"/><path d="M755 388 L762.6 395.6 M762.6 388 L755 395.6"/><path d="M914 483.6 H923.6 M918.8 478.8 V488.4"/><path d="M772.2 463.3 L778.7 457.2" stroke-width="1.2"/></g>
<circle cx="772.4" cy="457.2" r="1.2" fill="#68b38d"/><circle cx="778.3" cy="463" r="1.2" fill="#68b38d"/>
<text x="815.6" y="339" font-family="Liberation Sans, sans-serif" font-size="12" font-weight="700" fill="#68b38d" text-anchor="middle">$</text>
</svg>
<span class="t" style="left:642.40px;top:524px;font-size:14px;font-weight:700;color:#0d1a2f;letter-spacing:0.503px;line-height:20px;height:20px;">Desculpe, não encontramos resultados para sua busca</span>
<span class="t" style="left:721.60px;top:543px;font-size:13px;font-weight:400;color:#2a3242;letter-spacing:0.508px;line-height:21px;height:21px;">Redefina os filtros e tente novamente</span>

<!-- ============ PAGINATION ============ -->
<span class="t" style="left:268.60px;top:700px;font-size:13.5px;font-weight:400;color:#16213a;letter-spacing:0.460px;line-height:21px;height:21px;">30 / Página</span>
<svg style="left:353.6px;top:708.4px" width="11" height="8" viewBox="0 0 11 8" fill="none" stroke="#565656" stroke-width="1.4" stroke-linecap="round" stroke-linejoin="round"><path d="M0.9 1 L5.5 6.2 L10.1 1"/></svg>
<svg style="left:384px;top:706.5px" width="14" height="10" viewBox="0 0 14 10" fill="none" stroke="#b0b3b6" stroke-width="1.2" stroke-linecap="round" stroke-linejoin="round"><path d="M5.6 0.8 L1 5 L5.6 9.2 M12.6 0.8 L8 5 L12.6 9.2"/></svg>
<svg style="left:417px;top:706.5px" width="7" height="10" viewBox="0 0 7 10" fill="none" stroke="#b0b3b6" stroke-width="1.2" stroke-linecap="round" stroke-linejoin="round"><path d="M5.8 0.8 L1.2 5 L5.8 9.2"/></svg>
<div class="a" style="left:437px;top:701px;width:54px;height:20px;box-sizing:border-box;border:1px solid #cdd0d3;border-radius:10px;background:#fbfbfb"></div>
<span class="t" style="left:460.00px;top:700px;font-size:13px;font-weight:400;color:#16213a;letter-spacing:0.000px;line-height:21px;height:21px;">0</span>
<span class="t" style="left:498.40px;top:700px;font-size:13.5px;font-weight:400;color:#16213a;letter-spacing:0.749px;line-height:21px;height:21px;">/ 0</span>
<svg style="left:528px;top:706.5px" width="7" height="10" viewBox="0 0 7 10" fill="none" stroke="#b0b3b6" stroke-width="1.2" stroke-linecap="round" stroke-linejoin="round"><path d="M1.2 0.8 L5.8 5 L1.2 9.2"/></svg>
<svg style="left:554px;top:706.5px" width="14" height="10" viewBox="0 0 14 10" fill="none" stroke="#b0b3b6" stroke-width="1.2" stroke-linecap="round" stroke-linejoin="round"><path d="M1.4 0.8 L6 5 L1.4 9.2 M8.4 0.8 L13 5 L8.4 9.2"/></svg>
<div id="dim"></div>
<!-- ============ MODAL ============ -->
<div class="a" style="left:289.2px;top:229.2px;width:413.8px;height:185.6px;background:#fff;border-radius:4px;box-shadow:0 2px 6px rgba(0,0,0,.28);"></div>
<div class="a" style="left:290px;top:269.2px;width:412px;height:1px;background:#e3e4e6"></div>
<span class="t" style="left:303.40px;top:238px;font-size:15px;font-weight:400;color:#232d3e;letter-spacing:0.995px;line-height:21px;height:21px;">Status</span>
<svg style="left:675.3px;top:245px" width="10" height="10" viewBox="0 0 10 10" fill="none" stroke="#4b4b4b" stroke-width="2.3"><path d="M0.9 0.9 L8.9 8.9 M8.9 0.9 L0.9 8.9"/></svg>
<!-- left column -->
<svg style="left:305.6px;top:284px" width="16" height="12" viewBox="0 0 16 12" fill="none" stroke="#555" stroke-width="1" stroke-linecap="round" stroke-linejoin="round">
<path d="M4 11 H12.2 Q15.4 11 15.4 8 Q15.4 5.4 12.8 5 Q12.2 0.7 8 0.7 Q4.6 0.7 3.6 4 Q0.6 4.4 0.6 7.6 Q0.6 11 4 11 Z"/><path d="M8 9 V4.2 M5.8 6.2 L8 4 L10.2 6.2"/></svg>
<svg style="left:307.6px;top:307px" width="10" height="10" viewBox="0 0 10 10" fill="none" stroke="#ff5666" stroke-width="1.3" stroke-linecap="round"><path d="M0.7 0.7 L9.3 9.7 M9.3 0.7 L0.7 9.7"/></svg>
<svg style="left:305.8px;top:329px" width="16" height="16" viewBox="0 0 16 16" fill="none" stroke="#1a84ea" stroke-width="1.2" stroke-linecap="round" stroke-linejoin="round">
<path d="M1.2 7 A6.8 6.8 0 0 1 13.6 3.6 M14 0.8 V4 H10.8 M14.8 9 A6.8 6.8 0 0 1 2.4 12.4 M2 15.2 V12 H5.2"/><path d="M8 4.2 V9" /><circle cx="8" cy="11.4" r=".5" fill="#1a84ea"/></svg>
<svg style="left:307.4px;top:352.6px" width="12" height="15" viewBox="0 0 12 15" fill="none" stroke="#ffb229" stroke-width="1.2" stroke-linecap="round" stroke-linejoin="round">
<path d="M0.8 14.4 V0.8 M0.8 1.2 H10.8 L9.4 4.6 L10.8 8.2 H0.8"/></svg>
<svg style="left:305.8px;top:375.4px" width="16" height="16" viewBox="0 0 16 16" fill="none" stroke="#555" stroke-width="1.1" stroke-linecap="round" stroke-linejoin="round">
<path d="M12.2 2.2 A7 7 0 1 0 15 8.4 M9.4 1.2 H12.8 V4.6"/><path d="M8 4.6 V9.2"/><circle cx="8" cy="11.6" r=".5" fill="#555"/></svg>
<!-- right column icons -->
<svg style="left:505.8px;top:282.2px" width="16" height="16" viewBox="0 0 16 16" fill="none" stroke="#ffb229" stroke-width="1.1" stroke-linecap="round">
<circle cx="8" cy="7.6" r="7"/><path d="M5.8 6 Q5.8 3.8 8 3.8 Q10.2 3.8 10.2 5.8 Q10.2 7.2 8 7.8 V9.2"/><circle cx="8" cy="11.2" r=".5" fill="#ffb229"/></svg>
<svg style="left:506.2px;top:307.4px" width="16" height="11" viewBox="0 0 16 11" fill="none" stroke="#ffb229" stroke-width="1.2" stroke-linecap="round" stroke-linejoin="round"><path d="M0.7 6.4 L5 10.2 L15.3 0.7"/></svg>
<svg style="left:505.8px;top:329.6px" width="16" height="14" viewBox="0 0 16 14" fill="none" stroke="#ff5c6e" stroke-width="1.05" stroke-linecap="round" stroke-linejoin="round">
<path d="M8 0.8 L15.3 13.2 H0.7 Z"/><path d="M8 4.8 V9.2"/><circle cx="8" cy="11.2" r=".45" fill="#ff5c6e"/></svg>
<svg style="left:507.2px;top:354px" width="15" height="11" viewBox="0 0 15 11" fill="none" stroke="#17c27b" stroke-width="1.2" stroke-linecap="round" stroke-linejoin="round"><path d="M0.7 6.6 L4.6 10.2 L14.3 0.7"/></svg>
<div class="cb" style="left:326px;top:282.2px;width:16px;height:16px;border-color:#a2a2a2"></div>
<svg style="left:329.6px;top:287.0px" width="9" height="7" viewBox="0 0 9 7" fill="none" stroke="#0b7ae6" stroke-width="1.5" stroke-linecap="round" stroke-linejoin="round"><path d="M0.9 3.4 L3.3 5.8 L8.1 0.9"/></svg>
<span class="t" style="left:348.80px;top:279px;font-size:13px;font-weight:400;color:#2b3545;letter-spacing:0.525px;line-height:21px;height:21px;">Enviado</span>
<div class="cb" style="left:326px;top:306px;width:16px;height:16px;border-color:#a2a2a2"></div>
<svg style="left:329.6px;top:310.8px" width="9" height="7" viewBox="0 0 9 7" fill="none" stroke="#0b7ae6" stroke-width="1.5" stroke-linecap="round" stroke-linejoin="round"><path d="M0.9 3.4 L3.3 5.8 L8.1 0.9"/></svg>
<span class="t" style="left:348.80px;top:302px;font-size:13px;font-weight:400;color:#2b3545;letter-spacing:0.290px;line-height:21px;height:21px;">Envio com Erro</span>
<div class="cb" style="left:326px;top:329px;width:16px;height:16px;border-color:#a2a2a2"></div>
<svg style="left:329.6px;top:333.8px" width="9" height="7" viewBox="0 0 9 7" fill="none" stroke="#0b7ae6" stroke-width="1.5" stroke-linecap="round" stroke-linejoin="round"><path d="M0.9 3.4 L3.3 5.8 L8.1 0.9"/></svg>
<span class="t" style="left:349.80px;top:326px;font-size:13px;font-weight:400;color:#2b3545;letter-spacing:0.734px;line-height:21px;height:21px;">Gerado</span>
<div class="cb" style="left:326px;top:352.5px;width:16px;height:16px;border-color:#a2a2a2"></div>
<svg style="left:329.6px;top:357.3px" width="9" height="7" viewBox="0 0 9 7" fill="none" stroke="#0b7ae6" stroke-width="1.5" stroke-linecap="round" stroke-linejoin="round"><path d="M0.9 3.4 L3.3 5.8 L8.1 0.9"/></svg>
<span class="t" style="left:348.80px;top:349px;font-size:13px;font-weight:400;color:#2b3545;letter-spacing:0.469px;line-height:21px;height:21px;">Não Enviado</span>
<div class="cb" style="left:326px;top:376.2px;width:16px;height:16px;border-color:#a2a2a2"></div>
<svg style="left:329.6px;top:381.0px" width="9" height="7" viewBox="0 0 9 7" fill="none" stroke="#0b7ae6" stroke-width="1.5" stroke-linecap="round" stroke-linejoin="round"><path d="M0.9 3.4 L3.3 5.8 L8.1 0.9"/></svg>
<span class="t" style="left:348.80px;top:373px;font-size:13px;font-weight:400;color:#2b3545;letter-spacing:0.517px;line-height:21px;height:21px;">Não Processado</span>
<div class="cb" style="left:526px;top:282.2px;width:16px;height:16px;border-color:#a2a2a2"></div>
<svg style="left:529.6px;top:287.0px" width="9" height="7" viewBox="0 0 9 7" fill="none" stroke="#0b7ae6" stroke-width="1.5" stroke-linecap="round" stroke-linejoin="round"><path d="M0.9 3.4 L3.3 5.8 L8.1 0.9"/></svg>
<span class="t" style="left:550.40px;top:279px;font-size:13px;font-weight:400;color:#2b3545;letter-spacing:0.466px;line-height:21px;height:21px;">Outras Inconsistências</span>
<div class="cb" style="left:526px;top:306px;width:16px;height:16px;border-color:#a2a2a2"></div>
<span class="t" style="left:549.40px;top:302px;font-size:13px;font-weight:400;color:#2b3545;letter-spacing:0.400px;line-height:21px;height:21px;">Proc. Advertências</span>
<div class="cb" style="left:526px;top:329px;width:16px;height:16px;border-color:#a2a2a2"></div>
<svg style="left:529.6px;top:333.8px" width="9" height="7" viewBox="0 0 9 7" fill="none" stroke="#0b7ae6" stroke-width="1.5" stroke-linecap="round" stroke-linejoin="round"><path d="M0.9 3.4 L3.3 5.8 L8.1 0.9"/></svg>
<span class="t" style="left:549.40px;top:326px;font-size:13px;font-weight:400;color:#2b3545;letter-spacing:0.242px;line-height:21px;height:21px;">Proc. com Erro</span>
<div class="cb" style="left:526px;top:352.5px;width:16px;height:16px;border-color:#a2a2a2"></div>
<span class="t" style="left:549.40px;top:349px;font-size:13px;font-weight:400;color:#2b3545;letter-spacing:0.378px;line-height:21px;height:21px;">Proc. com Sucesso</span>
<!-- ============ RED ANNOTATIONS ============ -->
<svg style="left:0;top:0" width="1563" height="740" viewBox="0 0 1563 740" fill="none" stroke="#ff0000" stroke-width="2.5">
<rect x="8.1" y="191.1" width="36.8" height="39.4" rx="1"/>
<rect x="56.1" y="274.1" width="65.8" height="21.8" rx="1"/>
<rect x="67.2" y="452.2" width="119.8" height="22.5" rx="1"/>
<rect x="504.4" y="302.1" width="166.1" height="22.1" rx="1"/>
<rect x="506.1" y="350.1" width="165.7" height="21.8" rx="1"/>
<path d="M392.8 212.6 Q455 213.4 521 212.4" stroke-width="3" stroke-linecap="round"/>
<path d="M1379.6 211.8 Q1430 212.6 1480 211.2" stroke-width="2.8" stroke-linecap="round"/>
<path d="M312.2 150.8 L323 178" stroke-width="2.5" stroke-linecap="round"/>
<path d="M327.5 188.9 L317.9 177.4 L326.4 174 Z" fill="#ff0000" stroke-width="0.6" stroke-linejoin="round"/>
<path d="M228.9 234.8 L281 213" stroke-width="2.7" stroke-linecap="round"/>
<path d="M290.9 208.8 L276.7 209.8 L280.7 217.7 Z" fill="#ff0000" stroke-width="0.6" stroke-linejoin="round"/>
<path d="M597.6 156.8 L602.6 178.5" stroke-width="2.4" stroke-linecap="round"/>
<path d="M605.3 190 L598.3 178.4 L606.6 176.4 Z" fill="#ff0000" stroke-width="0.6" stroke-linejoin="round"/>
</svg>
<!-- white redaction box -->
<div class="a" style="left:1506px;top:10.8px;width:47.4px;height:48.2px;border-radius:12px;background:#fff"></div>
<!-- assistant avatar -->
<div class="a" style="left:1512px;top:692px;width:41px;height:40px;box-sizing:border-box;border:1.6px solid #1f86e0;border-radius:21px 21px 21px 2px;background:#bfe0fb;overflow:hidden">
<svg style="left:0;top:0" width="38" height="37" viewBox="0 0 38 37">
<path d="M6.4 30 C5 17 7.6 1 18.6 0.4 C29.6 1 31.4 15 32.4 29 L26 33 H10 Z" fill="#4b342d"/>
<path d="M11.6 13 C11.6 6.4 14.6 3.6 19 3.6 C23.6 3.6 26.2 6.8 26 13 C25.8 19 23 23.4 19 23.4 C15 23.4 11.8 19 11.6 13 Z" fill="#efc8b6"/>
<path d="M15.6 22 H22.6 V29 H15.6 Z" fill="#e7baa6"/>
<path d="M0 37 C1 29.6 6 27.6 13 26 L19 30 L25.2 25.6 C31 27 35.4 28.6 37.4 37 Z" fill="#efe8e5"/>
<path d="M11.4 9 C13 4.4 16.4 2.6 19.6 3 C23.2 3.2 25.8 6 26.4 10.4 C23.6 7.4 20.6 6.4 17.2 7 C14.6 7.4 13 8.4 11.4 12 Z" fill="#4b342d"/>
<g fill="#cfd4dc" fill-opacity=".35" stroke="#3b3f4a" stroke-width="1"><rect x="12" y="10.4" width="6" height="4.8" rx="1.6"/><rect x="20" y="10.4" width="6" height="4.8" rx="1.6"/><path d="M18 12 H20"/></g>
<path d="M15.8 17.6 Q19 21 22.4 17.6 Q19 18.8 15.8 17.6 Z" fill="#fff" stroke="#c4555a" stroke-width=".8"/>
</svg></div>
</div></div>
</body>
</html>
